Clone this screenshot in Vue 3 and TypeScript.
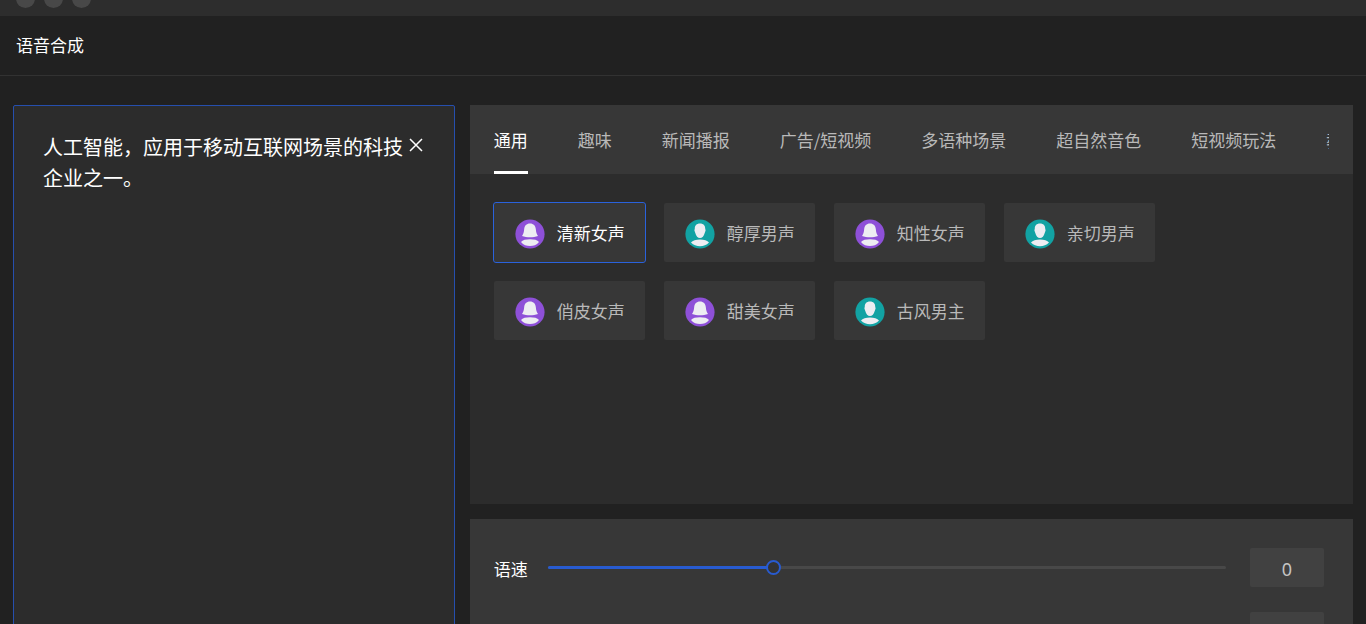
<script setup lang="ts">
import { computed, reactive, ref } from 'vue'

interface Voice {
  name: string
  gender: 'female' | 'male'
}

interface Setting {
  id: string
  label: string
  value: number
}

const MIN = -50
const MAX = 100

const text = ref('人工智能，应用于移动互联网场景的科技企业之一。')
const tabs = ['通用', '趣味', '新闻播报', '广告/短视频', '多语种场景', '超自然音色', '短视频玩法', '教育']
const activeTab = ref('通用')

const voices: Voice[] = [
  { name: '清新女声', gender: 'female' },
  { name: '醇厚男声', gender: 'male' },
  { name: '知性女声', gender: 'female' },
  { name: '亲切男声', gender: 'male' },
  { name: '俏皮女声', gender: 'female' },
  { name: '甜美女声', gender: 'female' },
  { name: '古风男主', gender: 'male' },
]
const activeVoice = ref('清新女声')

const settings = reactive<Setting[]>([
  { id: 'speed', label: '语速', value: 0 },
  { id: 'pitch', label: '语调', value: 0 },
])
const fills = computed(() => settings.map((s) => `${((s.value - MIN) / (MAX - MIN)) * 100}%`))
</script>

<template>
  <div class="app">
    <div class="titlebar">
      <span class="dot"></span>
      <span class="dot"></span>
      <span class="dot"></span>
    </div>
    <header class="header">
      <h1>语音合成</h1>
    </header>

    <main class="main">
      <section class="editor">
        <textarea v-model="text" class="editor-text" aria-label="合成文本" spellcheck="false"></textarea>
        <button class="clear" type="button" aria-label="清空" @click="text = ''">
          <svg viewBox="0 0 16 16" width="16" height="16" aria-hidden="true">
            <path d="M2 2 L14 14 M14 2 L2 14" fill="none" stroke="currentColor" stroke-width="1.5" />
          </svg>
        </button>
      </section>

      <div class="side">
        <section class="voices">
          <nav class="tabs">
            <div class="tabs-clip">
              <button
                v-for="tab in tabs"
                :key="tab"
                type="button"
                class="tab"
                :class="{ active: tab === activeTab }"
                @click="activeTab = tab"
              >{{ tab }}</button>
            </div>
          </nav>
          <div class="voice-list">
            <button
              v-for="voice in voices"
              :key="voice.name"
              type="button"
              class="voice"
              :class="{ active: voice.name === activeVoice }"
              @click="activeVoice = voice.name"
            >
              <svg v-if="voice.gender === 'female'" class="avatar" viewBox="0 0 30 30" aria-hidden="true">
                <circle cx="15" cy="15" r="14.6" fill="#8e50d8" />
                <path d="M15 4.6 C11.4 4.6 9.6 7 9.2 10 C8.9 13.2 8.4 15.2 7 17 C9.5 17.9 12 18.2 15 18.2 C18 18.2 20.500 17.900 23 17 C21.600 15.200 21.100 13.200 20.800 10 C20.400 7 18.600 4.600 15 4.600 Z" fill="#ededf2" />
                <path d="M6 23 C7.500 21 11 20.300 15 20.300 C19 20.300 22.500 21 24 23 C21.500 26 18.500 27 15 27 C11.500 27 8.500 26 6 23 Z" fill="#ededf2" />
              </svg>
              <svg v-else class="avatar" viewBox="0 0 30 30" aria-hidden="true">
                <circle cx="15" cy="15" r="14.6" fill="#12a2a3" />
                <path d="M15 4.400 C11.500 4.400 9.700 6.500 9.800 9.500 L9.400 11.500 L10.300 14 C11 17 12.800 19 15 19 C17.200 19 19 17 19.700 14 L20.600 11.500 L20.200 9.500 C20.300 6.500 18.500 4.400 15 4.400 Z" fill="#ededf2" />
                <path d="M6 23.500 C7.500 21.200 11 20.400 15 20.400 C19 20.400 22.500 21.200 24 23.500 C21.500 26.200 18.500 27.200 15 27.200 C11.500 27.200 8.500 26.200 6 23.500 Z" fill="#ededf2" />
              </svg>
              <span class="voice-name">{{ voice.name }}</span>
            </button>
          </div>
        </section>

        <section class="settings">
          <div v-for="(setting, i) in settings" :key="setting.id" class="setting">
            <label :for="setting.id">{{ setting.label }}</label>
            <div class="slider">
              <div class="track"></div>
              <div class="fill" :style="{ width: fills[i] }"></div>
              <input :id="setting.id" v-model.number="setting.value" type="range" :min="MIN" :max="MAX" />
            </div>
            <input
              v-model.number="setting.value"
              class="value"
              type="text"
              inputmode="numeric"
              :aria-label="setting.label + '数值'"
            />
          </div>
        </section>
      </div>
    </main>
  </div>
</template>

<style>
body {
  margin: 0;
  background: #212121;
}
</style>

<style scoped>
.app {
  height: 100vh;
  overflow: hidden;
  background: #212121;
  color: #fff;
  font-family: "Noto Sans CJK SC", "Noto Sans", sans-serif;
  font-size: 17px;
}

button,
input,
textarea {
  margin: 0;
  padding: 0;
  border: 0;
  background: none;
  color: inherit;
  font: inherit;
}

.titlebar {
  display: flex;
  align-items: flex-end;
  gap: 9px;
  box-sizing: border-box;
  height: 16px;
  padding: 0 16px 8px;
  overflow: hidden;
  background: #2d2d2d;
}

.dot {
  flex: none;
  width: 19px;
  height: 19px;
  border-radius: 50%;
  background: #484848;
}

.header {
  display: flex;
  align-items: center;
  box-sizing: border-box;
  height: 60px;
  padding: 0 16px 2px;
  border-bottom: 1px solid #323232;
}

h1 {
  margin: 0;
  font-size: 17px;
  font-weight: 400;
  line-height: 24px;
}

.main {
  display: grid;
  grid-template-columns: minmax(0, 1fr) minmax(0, 2fr);
  gap: 15px;
  padding: 29px 13px 16px;
}

.editor {
  display: flex;
  align-items: flex-start;
  padding: 25px 30px 25px 29px;
  border: 1px solid #264fae;
  border-radius: 2px;
  background: #2c2c2c;
}

.editor-text {
  flex: 1;
  align-self: stretch;
  min-width: 0;
  overflow: hidden;
  resize: none;
  outline: none;
  font-size: 20px;
  line-height: 31px;
}

.clear {
  flex: none;
  display: flex;
  width: 16px;
  padding: 6px 0;
  cursor: pointer;
}

.side {
  display: flex;
  flex-direction: column;
  gap: 15px;
}

.voices {
  min-height: 399px;
  background: #2c2c2c;
}

.tabs {
  padding: 0 24px;
  background: #373737;
}

.tabs-clip {
  display: flex;
  gap: 50px;
  overflow: hidden;
}

.tab {
  flex: none;
  box-sizing: border-box;
  height: 69px;
  padding-top: 3px;
  border-bottom: 3px solid transparent;
  color: #b9b9b9;
  white-space: nowrap;
  cursor: pointer;
}

.tab.active {
  border-bottom-color: #fff;
  color: #fff;
}

.voice-list {
  display: grid;
  grid-template-columns: repeat(auto-fill, 151px);
  gap: 19px;
  padding: 29px 130px 29px 24px;
}

.voice {
  display: flex;
  align-items: center;
  gap: 12px;
  box-sizing: border-box;
  height: 59px;
  padding: 2px 0 0 21px;
  border-radius: 2px;
  background: #373737;
  color: #b9b9b9;
  white-space: nowrap;
  cursor: pointer;
}

.voice.active {
  outline: 1px solid #2a62dc;
  color: #fff;
}

.voice-name {
  padding-bottom: 2px;
}

.avatar {
  flex: none;
  width: 30px;
  height: 30px;
}

.settings {
  display: flex;
  flex-direction: column;
  gap: 25px;
  padding: 29px 29px 29px 24px;
  background: #373737;
}

.setting {
  display: flex;
  align-items: center;
}

.setting label {
  padding-top: 2px;
  margin-right: 20px;
}

.slider {
  flex: 1;
  display: grid;
  align-items: center;
  min-width: 0;
  margin-right: 24px;
}

.track,
.fill,
.slider input {
  grid-area: 1 / 1;
}

.track,
.fill {
  height: 3px;
  border-radius: 2px;
  background: #484848;
}

.fill {
  background: #285bd0;
}

.slider input {
  width: calc(100% + 14px);
  height: 15px;
  margin: 0 -7px;
  appearance: none;
  cursor: pointer;
}

.slider input::-webkit-slider-thumb {
  appearance: none;
  box-sizing: border-box;
  width: 15px;
  height: 15px;
  border: 2px solid #285bd0;
  border-radius: 50%;
  background: #333;
}

.value {
  box-sizing: border-box;
  width: 74px;
  height: 39px;
  padding-top: 2px;
  border-radius: 2px;
  background: #414141;
  color: #c4c4c4;
  font-family: "Noto Sans", "Noto Sans CJK SC", sans-serif;
  font-size: 18px;
  text-align: center;
}
</style>
